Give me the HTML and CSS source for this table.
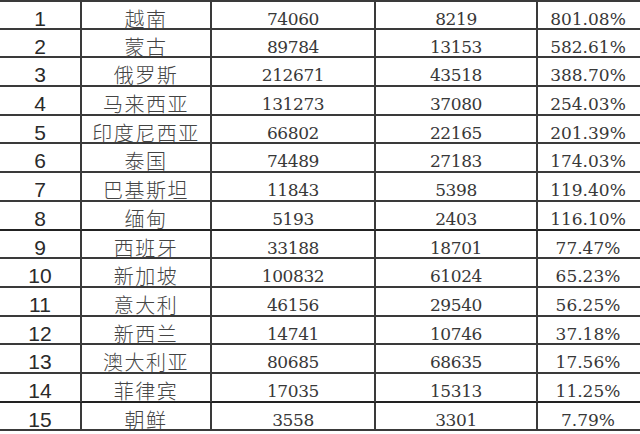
FILE: index.html
```html
<!DOCTYPE html>
<html>
<head>
<meta charset="utf-8">
<title>表</title>
<link rel="stylesheet" href="styles.css">
</head>
<body>
<div class="sheet">
  <div class="row"><div class="c idx">1</div><div class="c name">越南</div><div class="c num">74060</div><div class="c num">8219</div><div class="c pct">801.08%</div></div>
  <div class="row"><div class="c idx">2</div><div class="c name">蒙古</div><div class="c num">89784</div><div class="c num">13153</div><div class="c pct">582.61%</div></div>
  <div class="row"><div class="c idx">3</div><div class="c name">俄罗斯</div><div class="c num">212671</div><div class="c num">43518</div><div class="c pct">388.70%</div></div>
  <div class="row"><div class="c idx">4</div><div class="c name">马来西亚</div><div class="c num">131273</div><div class="c num">37080</div><div class="c pct">254.03%</div></div>
  <div class="row"><div class="c idx">5</div><div class="c name">印度尼西亚</div><div class="c num">66802</div><div class="c num">22165</div><div class="c pct">201.39%</div></div>
  <div class="row"><div class="c idx">6</div><div class="c name">泰国</div><div class="c num">74489</div><div class="c num">27183</div><div class="c pct">174.03%</div></div>
  <div class="row"><div class="c idx">7</div><div class="c name">巴基斯坦</div><div class="c num">11843</div><div class="c num">5398</div><div class="c pct">119.40%</div></div>
  <div class="row thick"><div class="c idx">8</div><div class="c name">缅甸</div><div class="c num">5193</div><div class="c num">2403</div><div class="c pct">116.10%</div></div>
  <div class="row"><div class="c idx">9</div><div class="c name">西班牙</div><div class="c num">33188</div><div class="c num">18701</div><div class="c pct">77.47%</div></div>
  <div class="row"><div class="c idx">10</div><div class="c name">新加坡</div><div class="c num">100832</div><div class="c num">61024</div><div class="c pct">65.23%</div></div>
  <div class="row"><div class="c idx">11</div><div class="c name">意大利</div><div class="c num">46156</div><div class="c num">29540</div><div class="c pct">56.25%</div></div>
  <div class="row"><div class="c idx">12</div><div class="c name">新西兰</div><div class="c num">14741</div><div class="c num">10746</div><div class="c pct">37.18%</div></div>
  <div class="row"><div class="c idx">13</div><div class="c name">澳大利亚</div><div class="c num">80685</div><div class="c num">68635</div><div class="c pct">17.56%</div></div>
  <div class="row thick"><div class="c idx">14</div><div class="c name">菲律宾</div><div class="c num">17035</div><div class="c num">15313</div><div class="c pct">11.25%</div></div>
  <div class="row"><div class="c idx">15</div><div class="c name">朝鲜</div><div class="c num">3558</div><div class="c num">3301</div><div class="c pct">7.79%</div></div>
</div>
</body>
</html>
```
FILE: styles.css
```css
html, body {
  margin: 0;
  padding: 0;
  background: #ffffff;
}
body {
  width: 640px;
  height: 434px;
  overflow: hidden;
}
.sheet {
  border-top: 2px solid #3a3a3a;
  width: 660px;
}
.row {
  display: grid;
  grid-template-columns: 80px 130px 164px 162px 124px;
  height: 28.7px;
  box-sizing: border-box;
  border-bottom: 2px solid #3a3a3a;
}
.row:first-child {
  height: 27.7px;
}
.row.thick {
  border-bottom-color: #222;
}
.c {
  border-left: 2px solid #3a3a3a;
  text-align: center;
  color: #2e2e2e;
  white-space: nowrap;
  line-height: 22px;
  padding-top: 6px;
}
.c.idx {
  border-left: none;
  font-family: "Liberation Sans", Arial, sans-serif;
  font-size: 21px;
  color: #2a2a2a;
}
.c.name {
  font-family: "Noto Sans CJK SC", sans-serif;
  font-size: 20px;
  font-weight: 300;
  letter-spacing: 1.5px;
  color: #444;
}
.c.num, .c.pct {
  font-family: "DejaVu Serif", serif;
  font-size: 17px;
  letter-spacing: -0.4px;
  color: #383838;
}
.c.pct {
  padding-right: 22px;
  letter-spacing: 0;
}
```
